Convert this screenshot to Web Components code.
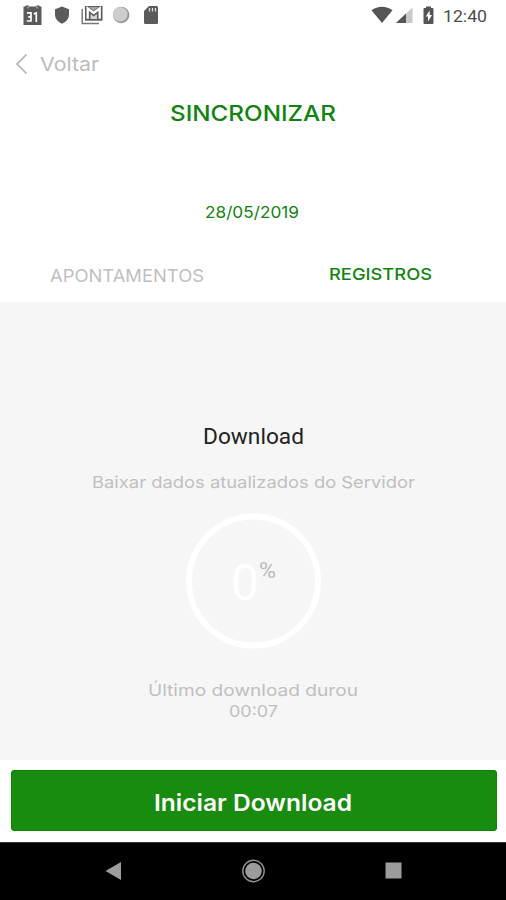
<!DOCTYPE html>
<html lang="pt-BR">
<head>
<meta charset="utf-8">
<title>Sincronizar</title>
<style>
html,body{margin:0;height:100%;background:#fff;overflow:hidden}
</style>
</head>
<body>
<sync-screen></sync-screen>
<script>
const define = (name, html, ready) => customElements.define(name, class extends HTMLElement {
  connectedCallback() {
    if (this.shadowRoot) return;
    const t = document.createElement('template');
    t.innerHTML = html;
    this.attachShadow({mode: 'open'}).append(t.content.cloneNode(true));
    if (ready) ready(this);
  }
});

// A line of text whose glyphs are widened to a fixed advance.
define('fit-text', `
<style>
:host{display:block;white-space:nowrap;flex:none;text-align:left}
span{display:inline-block;transform-origin:0 50%}
</style><span><slot></slot></span>`, el => {
  const w = Number(el.getAttribute('width'));
  const span = el.shadowRoot.querySelector('span');
  const natural = span.getBoundingClientRect().width;
  el.style.width = w + 'px';
  if (natural) span.style.transform = 'scaleX(' + w / natural + ')';
});

define('status-bar', `
<style>
:host{display:flex;height:32px;justify-content:space-between;box-sizing:border-box;color:#555}
svg{display:block}
.right{display:flex}
.clock{font:400 17px/32px Roboto,sans-serif;color:#4c4c4c;width:63px}
</style>
<svg width="170" height="32" viewBox="0 0 170 32" fill="#5b5b5b">
  <path d="M23.500 6.500h2V5.500h3v1h8v-1h3v1h2V10h-18zM23.500 9.500h18v15.500h-18z"/>
  <path d="M27 7.800h2M36 7.800h2" stroke="#bbb"/>
  <path d="M27 12.800h4v8.200h-4.200M28.200 16.900h2.800M33.800 13.900l2.500-1V22" fill="none" stroke="#fff" stroke-width="1.700"/>
  <path d="M62 6.500l7 2.800v5.200c0 4.600-3.300 7.500-7 9.300-3.700-1.800-7-4.700-7-9.300V9.300z"/>
  <path d="M82.200 9v14.500H99" fill="none" stroke="#777" stroke-width="1.500"/>
  <path d="M85 6h17.500v14.700H85z"/>
  <path d="M87.700 18.700V8.300l6 4.700 6-4.700v10.400" fill="none" stroke="#fff" stroke-width="2.300"/>
  <path d="M89 7h9.500l-4.800 3.700z" fill="#fff" opacity=".45"/>
  <path d="M90.500 19v-5l3.200 2.500 3.200-2.500v5z" fill="#fff" opacity=".75"/>
  <circle cx="121.200" cy="15" r="8.200" fill="#969696"/><circle cx="120.300" cy="14.300" r="7.300" fill="#cdcdcd"/>
  <path d="M149 6h7.500q1.500 0 1.500 1.500v15q0 1.500-1.500 1.500h-11q-1.500 0-1.500-1.500V11z"/>
  <path d="M149.500 8v3.500M152.500 8v3.500M155.500 8v3.500" stroke="#ddd" stroke-width="1.300"/>
</svg>
<div class="right">
  <svg width="73" height="32" viewBox="370 0 73 32" fill="#555">
    <path d="M371.500 10.300c6-4.700 15-4.700 21 0L382 23z"/>
    <path d="M412.500 7.500V23H396z" fill="#c8c8c8"/><path d="M406 13.600V23h-10z"/>
    <path d="M426 6.500h5V8h1.500q1 0 1 1v14q0 1-1 1h-8q-1 0-1-1V9q0-1 1-1h1.500z"/>
    <path d="M429.700 10.500l-4 6h2.300v5l4-6.500h-2.300z" fill="#fff"/>
  </svg>
  <div class="clock"><fit-text width="44">12:40</fit-text></div>
</div>`);

define('back-link', `
<style>
:host{display:flex;height:62px;align-items:center;padding:2px 0 0 14px;box-sizing:border-box;gap:11px;color:#bcbcbc;font:400 19px/22px Inter,sans-serif}
fit-text{margin-top:1px}
</style>
<svg width="15" height="22" viewBox="0 0 15 22"><path d="M12.500 1.500L3 11l9.500 9.500" fill="none" stroke="#b4b4b4" stroke-width="1.700"/></svg>
<fit-text width="59"><slot></slot></fit-text>`);

define('progress-ring', `
<style>
:host{display:grid;width:136px;height:136px;place-items:center}
svg,div{grid-area:1/1}
div{display:flex;align-items:flex-start;font-family:Roboto,sans-serif;height:60px;margin-top:3px}
.n{font-size:50px;line-height:60px;color:#fff;font-weight:400}
.p{font-size:22.500px;line-height:24px;color:#bababa;font-weight:400;margin-top:5px}
</style>
<svg width="136" height="136" viewBox="0 0 136 136"><circle cx="68.500" cy="68" r="64.500" fill="none" stroke="#fff" stroke-width="6"/></svg>
<div><fit-text class="n" width="28">0</fit-text><fit-text class="p" width="17">%</fit-text></div>`);

define('main-button', `
<style>
:host{display:block;padding:10px 9.500px 11px 11px;background:#fff}
button{display:flex;align-items:center;justify-content:center;width:100%;height:61px;border:0;border-radius:4px;background:#188c0e;color:#fff;font:600 22.500px/30px Inter,sans-serif;padding:4px 1px 0 0;box-shadow:inset 0 0 0 1px #0c8505}
</style>
<button><fit-text width="198"><slot></slot></fit-text></button>`);

define('nav-bar', `
<style>
:host{display:flex;height:58px;background:#000;align-items:center;justify-content:space-between;padding:0 104px 2px 105px;box-sizing:border-box;border-top:1px solid #333}
svg{display:block}
</style>
<svg width="17" height="18" viewBox="0 0 17 18"><path d="M16 0v18L.5 9z" fill="#9c9c9c"/></svg>
<svg width="24" height="24" viewBox="0 0 24 24"><circle cx="11.500" cy="12" r="8.300" fill="#9c9c9c"/><circle cx="11.500" cy="12" r="10.700" fill="none" stroke="#929292" stroke-width="1.400"/></svg>
<svg width="17" height="17" viewBox="0 0 17 17"><rect x=".5" y=".5" width="16" height="16" fill="#9c9c9c"/></svg>`);

define('sync-screen', `
<style>
:host{display:flex;flex-direction:column;width:506px;height:900px;background:#fff;font-family:Inter,sans-serif}
h1,h2,p{margin:0}
header{height:176px;display:flex;flex-direction:column;align-items:center;color:#128311}
h1{font:550 22px/30px Inter,sans-serif;margin-top:4px}
.date{font:400 16.500px/20px Inter,sans-serif;margin:74px 3px 0 0}
.tabs{display:grid;grid-template-columns:1fr 1fr;height:32px;font-size:17px;line-height:20px}
.tabs>*{justify-self:center}
.a{color:#bfbfbf;margin-top:-4px}
.b{color:#128311;font-weight:450;font-size:16.500px;margin:-6px 0 0 2px}
main{height:458px;background:#f6f6f6;display:flex;flex-direction:column;align-items:center;color:#bfbfbf;font-size:16.500px;line-height:21px}
h2{font:400 22.500px/28px Roboto,sans-serif;color:#222;margin-top:120px}
.sub{margin-top:22px}
progress-ring{margin-top:20px}
.last{margin-top:31px;display:flex;flex-direction:column;align-items:center}
</style>
<status-bar></status-bar>
<back-link>Voltar</back-link>
<header>
  <h1><fit-text width="166">SINCRONIZAR</fit-text></h1>
  <p class="date"><fit-text width="94">28/05/2019</fit-text></p>
</header>
<nav class="tabs"><fit-text class="a" width="154">APONTAMENTOS</fit-text><fit-text class="b" width="103">REGISTROS</fit-text></nav>
<main>
  <h2><fit-text width="101">Download</fit-text></h2>
  <p class="sub"><fit-text width="323">Baixar dados atualizados do Servidor</fit-text></p>
  <progress-ring></progress-ring>
  <div class="last"><fit-text width="210">Último download durou</fit-text><fit-text width="49">00:07</fit-text></div>
</main>
<main-button>Iniciar Download</main-button>
<nav-bar></nav-bar>`);
</script>
</body>
</html>
